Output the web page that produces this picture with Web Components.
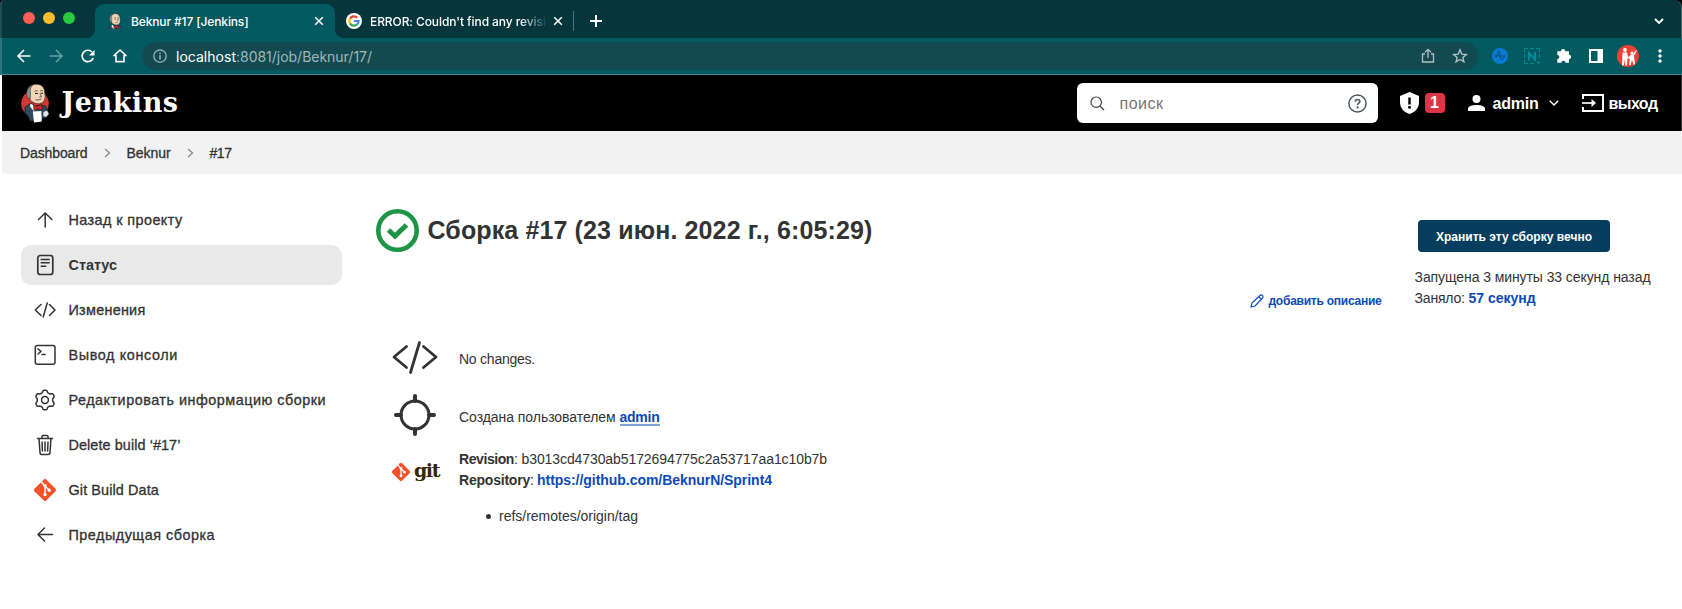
<!DOCTYPE html>
<html lang="ru">
<head>
<meta charset="utf-8">
<title>Beknur #17 [Jenkins]</title>
<style>
html,body{margin:0;height:100%;overflow:hidden;background:#fff}
body{font-family:"Liberation Sans",Arial,sans-serif;color:#333}
</style>
</head>
<body>
<browser-window>
  <jenkins-header></jenkins-header>
  <bread-crumbs></bread-crumbs>
  <build-page></build-page>
</browser-window>
<script>
const GIT = (s) => `<svg width="${s}" height="${s}" viewBox="0 0 24 24"><rect x="3.700" y="3.700" width="16.600" height="16.600" rx="1.600" transform="rotate(45 12 12)" fill="#f4502a"/><g stroke="#fff" stroke-width="1.500" fill="none"><path d="M8 3.500l4 4.500v8M12 8l4 4"/></g><circle cx="12" cy="7.800" r="1.700" fill="#fff"/><circle cx="12" cy="16.600" r="1.700" fill="#fff"/><circle cx="16.200" cy="12.200" r="1.700" fill="#fff"/></svg>`;
const BUTLER = (w, h, box, disc) => `<svg width="${w}" height="${h}" viewBox="${box}">${disc ? '<ellipse cx="14" cy="20.500" rx="13.800" ry="13.500" fill="#d33833"/>' : ''}<path d="M4 24l6-4 4 3 5-1 5.500 1 3 7-3 5-4 .5L19 38H9l-2-5-3-3z" fill="#2f4a5c" stroke="#131c22" stroke-width=".8"/><path d="M9.500 20.500l5 3-1.500 5-4-5z" fill="#fff"/><path d="M12.500 22l4 1.500 4-2 1 5.500-4.500-1.500-4 2z" fill="#d5282c" stroke="#4a1010" stroke-width=".6"/><path d="M6.500 9C7 3.500 11 1.200 15.500 1.200c5 0 8 3.300 8.300 8.300l.4 4c0 4.500-3 7.300-6.700 7.300-4 0-8-2.300-9.500-6z" fill="#f0d6b7" stroke="#3b2f28" stroke-width=".8"/><path d="M7 15.500C4.500 11 5.500 4 11.500 1.900 9 5 8.800 7.500 9.400 9.500l-.2 6z" fill="#8f9295" stroke="#333" stroke-width=".7"/><path d="M13.500 8.500q1.500-1.300 3.200-.6M19 7.800q1.500-.8 3 .2" stroke="#4b3829" fill="none" stroke-width=".8"/><path d="M14 10.500h3M19.500 10.300h2.500" stroke="#222" stroke-width="1.100"/><path d="M18.800 10.500l1.800 3.200-2.300.4M14.500 16.800q3 .8 6-.9" stroke="#4b3829" fill="none" stroke-width=".8"/><path d="M11.800 28.500l8.500-.5.5 10.500-7.800 1z" fill="#fff"/><path d="M22.500 29l3.500-1.500 1.800 3.500-2.500 3-3-1z" fill="#e4e4e4"/></svg>`;

const define = (name, markup) => customElements.define(name, class extends HTMLElement {
  constructor() {
    super();
    const t = document.createElement('template');
    t.innerHTML = markup;
    this.attachShadow({mode: 'open'}).append(t.content.cloneNode(true));
  }
});

/* One line of text whose tracking is adjusted to a measured width. */
customElements.define('fit-text', class extends HTMLElement {
  constructor() {
    super();
    this.attachShadow({mode: 'open'}).innerHTML = `<style>:host{display:inline-block;white-space:pre;flex:none}span{display:inline-block}</style><span><slot></slot></span>`;
  }
  connectedCallback() {
    const span = this.shadowRoot.querySelector('span');
    const w = +this.getAttribute('w'), n = this.textContent.length;
    span.style.letterSpacing = ((w - span.getBoundingClientRect().width) / n) + 'px';
    this.style.width = w + 'px';
  }
});

define('browser-tab', `<style>
:host{display:flex;align-items:center;box-sizing:border-box;height:34px;margin-top:4px;font:500 12px Inter,sans-serif;color:#fff}
:host([active]){width:240px;background:#035a61;border-radius:9px 9px 0 0;padding:0 11px 0 12px;position:relative}
:host([active])::before,:host([active])::after{content:"";position:absolute;bottom:0;width:8px;height:8px}
:host([active])::before{left:-8px;background:radial-gradient(circle at 0 0,transparent 7.500px,#035a61 8px)}
:host([active])::after{right:-8px;background:radial-gradient(circle at 100% 0,transparent 7.500px,#035a61 8px)}
:host(:not([active])){width:239px;padding-left:11px;box-sizing:border-box;border:0}
.t{flex:1;overflow:hidden;white-space:nowrap;margin-left:8px}
:host(:not([active])) .t{flex:none;width:176px;-webkit-mask:linear-gradient(90deg,#000 85%,transparent 101%);mask:linear-gradient(90deg,#000 85%,transparent 101%)}
.x{flex:none}:host(:not([active])) .x{margin-left:7px}
::slotted(*){flex:none;display:block}
::slotted(fit-text){display:inline-block}
</style><slot name="icon"></slot><div class="t"><slot></slot></div><svg class="x" width="10" height="10" viewBox="0 0 10 10"><path d="M1.200 1.200l7.600 7.600M8.800 1.200L1.200 8.800" stroke="#fff" stroke-width="1.500"/></svg>`);

define('browser-window', `<style>
:host{display:flex;flex-direction:column;height:609px;width:1682px;overflow:hidden}
.chrome{background:#000;box-shadow:none}
.strip{display:flex;box-sizing:border-box;height:38px;background:#04363c;border-top-left-radius:4px;border-top-right-radius:8px;padding-right:17px;border-left:2px solid #1f4d52;border-right:1px solid #48696d}
.lights{display:flex;gap:8px;align-items:center;width:72px;padding:0 0 3px 21px}
.lights i{width:12px;height:12px;border-radius:50%}
.sep{width:1px;height:20px;background:#4f7478;margin:11px 16px 0 -1px}
.plus{margin-top:15px}.down{margin:18px 0 0 auto}
.bar{display:flex;align-items:center;height:36px;background:#035a61;border-bottom:1px solid #45888d;border-left:2px solid #2b747a;padding:0 14px 0 14px}
.nav{display:flex;gap:16px;width:126px}
.omni{display:flex;align-items:center;width:1336px;height:28px;border-radius:14px;background:#134a51;box-sizing:border-box;padding:0 10px 0 11px;font:14px Inter,sans-serif;color:#a1b7b9}
.omni b{font-weight:400;color:#fff}
.sh{margin-left:auto;margin-right:16px}
.ext{display:flex;align-items:center;margin-left:14px;gap:16px}
svg{display:block;flex:none}
.page{flex:1;background:#fff;border-left:2px solid #fff;display:flex;flex-direction:column}
</style>
<div class="chrome"><div class="strip"><div class="lights"><i style="background:#ff5f57"></i><i style="background:#febc2e"></i><i style="background:#28c840"></i></div>
<browser-tab active><span slot="icon">${BUTLER(16,16,'2 0 26 28',false)}</span><fit-text w="117.500">Beknur #17 [Jenkins]</fit-text></browser-tab>
<browser-tab><svg slot="icon" width="16" height="16" viewBox="0 0 16 16"><circle cx="8" cy="8" r="8" fill="#fff"/><g fill="none" stroke-width="2.200"><path d="M4 5.600A4.600 4.600 0 0 1 11.300 4.800" stroke="#ea4335"/><path d="M4 10.400a4.700 4.700 0 0 1 0-4.800" stroke="#fbbc05"/><path d="M11.200 11.300A4.600 4.600 0 0 1 4 10.400" stroke="#34a853"/><path d="M8 8h4.600c0 1.400-.4 2.500-1.400 3.300" stroke="#4285f4"/></g></svg><fit-text w="183">ERROR: Couldn't find any revisio</fit-text></browser-tab>
<div class="sep"></div><svg class="plus" width="12" height="12"><path d="M6 0v12M0 6h12" stroke="#fff" stroke-width="2"/></svg>
<svg class="down" width="10" height="7"><path d="M1 1l4 4 4-4" stroke="#fff" stroke-width="1.800" fill="none"/></svg></div></div>
<div class="bar"><div class="nav">
<svg width="16" height="16"><path d="M14.500 8H2.500M8 2L2 8l6 6" stroke="#fff" stroke-width="1.500" fill="none"/></svg>
<svg width="16" height="16"><path d="M1.500 8h12M8 2l6 6-6 6" stroke="#6a9fa3" stroke-width="1.500" fill="none"/></svg>
<svg width="16" height="16"><path d="M13.200 10A5.700 5.700 0 1 1 12 4" stroke="#fff" stroke-width="1.700" fill="none"/><path d="M14.500 2V7.500H9z" fill="#fff"/></svg>
<svg width="16" height="16"><path d="M1.500 8.200L8 2l6.500 6.200M4 7v6.600h8V7" stroke="#fff" stroke-width="1.600" fill="none"/></svg>
</div><div class="omni"><svg width="14" height="14"><circle cx="7" cy="7" r="6.200" fill="none" stroke="#a1b7b9" stroke-width="1.300"/><path d="M7 6v4.500M7 3.500v1.400" stroke="#a1b7b9" stroke-width="1.500"/></svg><span style="width:9px"></span><b><fit-text w="60">localhost</fit-text></b><fit-text w="136">:8081/job/Beknur/17/</fit-text>
<svg class="sh" width="16" height="16"><path d="M5 6H2.500v8h11V6H11M8 10V1.500M5 4.300L8 1.300l3 3" stroke="#b0c0c2" stroke-width="1.300" fill="none"/></svg>
<svg width="16" height="16"><path d="M8 1.800l1.800 4.300 4.500.4-3.400 3 1 4.400L8 11.500 4.100 13.900l1-4.400-3.400-3 4.500-.4z" stroke="#b0c0c2" stroke-width="1.400" fill="none"/></svg></div>
<div class="ext">
<svg width="16" height="16"><circle cx="8" cy="8" r="8" fill="#0a7bd3"/><path d="M2 8h12M4 9.500L7 3l2 8.500h1.500L12.500 8" stroke="#085486" stroke-width="1.100" fill="none"/></svg>
<svg width="16" height="16"><path d="M.5 4V.5H4M6 .5h4M12 .5h3.500V4M15.500 6v4M.5 6v4M.5 12v3.500H4M6 15.500h4M13 14.500h3M14.500 13v3" fill="none" stroke="#078a98"/><path d="M5 12.500V5l6 6.500V4" stroke="#078a98" stroke-width="2.200" fill="none"/></svg>
<svg width="16" height="16"><path d="M5 3.200a2.100 2.100 0 0 1 4.200 0H13v3.600a2.100 2.100 0 0 1 0 4.200V14.800H9.500a2.100 2.100 0 0 0-4.200 0H1.300v-3.700a2.100 2.100 0 0 0 0-4.200V3.200z" fill="#fff"/></svg>
<svg width="16" height="16"><path d="M2 2h12v12H2z" stroke="#fff" stroke-width="2" fill="none"/><path d="M9.500 1H15v14H9.500z" fill="#fff"/></svg>
<svg width="22" height="22" style="margin:0 -3px"><circle cx="11" cy="11" r="11" fill="#ee4035"/><circle cx="8" cy="5" r="1.900" fill="#fff"/><circle cx="15" cy="8" r="1.500" fill="#fff"/><path d="M5.500 7.500h4.500l1.200 5 2.800-3h2L19 5l.8.500L17 11l1 8.500h-1.500L15 15l-1.500 5H12l.8-6.500-2.300 0-.5 7H8.200l-.5-6-1 6H5z" fill="#fff"/></svg>
<svg width="16" height="16"><g fill="#fff"><circle cx="8" cy="3" r="1.700"/><circle cx="8" cy="8" r="1.700"/><circle cx="8" cy="13" r="1.700"/></g></svg>
</div></div>
<div class="page"><slot></slot></div>`);

define('jenkins-header', `<style>
:host{display:flex;align-items:center;height:56px;background:#000;color:#fff;padding:0 23.500px 0 19px;font-weight:700;font-size:16px;border-right:1px solid #3a3a3a}
svg{display:block;flex:none}
.word{font:700 27px "DejaVu Serif",serif;margin:-1px auto 0 12.500px}
.search{display:flex;align-items:center;box-sizing:border-box;width:301px;height:40px;border-radius:6px;background:#fff;color:#757575;font-weight:400;padding:0 11px 0 13px}
.search fit-text{margin:1px auto 0 15px}
.n{display:flex;align-items:center;justify-content:center;width:20px;height:20px;border-radius:4px;background:#dc3545;margin:0 23px 0 6px}
</style>${BUTLER(28,40,'0 0 28 40',true)}<fit-text class="word" w="117">Jenkins</fit-text>
<div class="search"><svg width="15" height="15"><circle cx="6.200" cy="6.200" r="5.200" fill="none" stroke="#444" stroke-width="1.200"/><path d="M10 10l4 4" stroke="#444" stroke-width="1.300"/></svg><fit-text w="44">поиск</fit-text>
<svg width="19" height="19" viewBox="0 0 19 19"><circle cx="9.500" cy="9.500" r="8.600" fill="none" stroke="#4d545d" stroke-width="1.500"/><path d="M7.300 7.700c0-3 4.600-2.900 4.600-.2 0 1.600-2.300 1.700-2.300 3.400" fill="none" stroke="#4d545d" stroke-width="1.600"/><circle cx="9.600" cy="13.400" r="1.100" fill="#4d545d"/></svg></div>
<svg width="19" height="22" viewBox="0 0 19 22" style="margin-left:22px"><path d="M9.500 0L19 4v6c0 6-4 10.500-9.500 12C4 20.500 0 16 0 10V4z" fill="#fff"/><path d="M9.500 5.500v7" stroke="#000" stroke-width="2.500"/><circle cx="9.500" cy="15.300" r="1.500"/></svg><div class="n">1</div>
<svg width="17" height="16"><circle cx="8.500" cy="4" r="4" fill="#fff"/><path d="M0 16v-2c0-3 4-4 8.500-4S17 11 17 14v2z" fill="#fff"/></svg>
<fit-text w="46" style="margin:1px 10px 0 8px">admin</fit-text><svg width="10" height="6"><path d="M.7.700L5 5 9.300.7" stroke="#fff" stroke-width="1.400" fill="none"/></svg>
<svg width="22" height="18" viewBox="0 0 22 18" style="margin:0 5px 0 23px"><path d="M1 5V1h20v16H1v-4" stroke="#fff" stroke-width="1.900" fill="none"/><path d="M0 9h12" stroke="#fff" stroke-width="1.700"/><path d="M9.500 5l4.500 4-4.500 4z" fill="#fff"/></svg><fit-text w="49" style="margin-top:2px">выход</fit-text>`);

define('bread-crumbs', `<style>:host{display:flex;align-items:center;height:43px;background:#f2f2f2;padding-left:18px;font-size:14px;-webkit-text-stroke:.3px #333;color:#333}svg{margin:0 16px}</style>
<fit-text w="67.500">Dashboard</fit-text><svg width="7" height="10"><path d="M1 1l4.500 4L1 9" fill="none" stroke="#888" stroke-width="1.300"/></svg><fit-text w="44">Beknur</fit-text><svg width="7" height="10"><path d="M1 1l4.500 4L1 9" fill="none" stroke="#888" stroke-width="1.300"/></svg><fit-text w="22">#17</fit-text>`);

define('side-item', `<style>:host{display:flex;align-items:center;box-sizing:border-box;height:40px;width:321px;border-radius:10px;padding-left:13px;font-size:14.400px;-webkit-text-stroke:.32px #333}
:host([active]){background:#e9e9e9;font-weight:700;-webkit-text-stroke:0}
.i{display:flex;justify-content:center;width:22px;margin-right:12.500px}::slotted(svg){display:block;flex:none}</style><div class="i"><slot name="icon"></slot></div><slot></slot>`);

const svg = (p) => `<svg slot="icon" width="22" height="22" viewBox="0 0 22 22" fill="none" stroke="#333" stroke-width="1.500" stroke-linecap="round" stroke-linejoin="round">${p}</svg>`;
/* Outline of the six-lobed cog. */
const gear = (() => { let d = ''; for (let i = 0; i <= 96; i++) { const a = i / 96 * 2 * Math.PI; const r = 8.800 + 1.1 * Math.tanh(2.2 * Math.cos(6 * a)); d += (i ? 'L' : 'M') + (11 + r * Math.sin(a)).toFixed(2) + ' ' + (11 - r * Math.cos(a)).toFixed(2); } return d + 'z'; })();
define('side-nav', `<style>:host{display:flex;flex-direction:column;gap:5px;width:321px;flex:none}</style>
<side-item>${svg('<path d="M11.200 18V4M4.500 10.500L11.200 4l6.700 6.500"/>')}<fit-text w="114">Назад к проекту</fit-text></side-item>
<side-item active>${svg('<rect x="3.800" y="1.500" width="15" height="19" rx="2.500" stroke-width="1.700"/><path d="M7.200 5.500h8M7.200 8.700h8M7.200 12.200h4.500" stroke-width="1.500"/>')}<fit-text w="48.500">Статус</fit-text></side-item>
<side-item>${svg('<path d="M7 5.500L1.300 11 7 16.500M15.500 5.500L21 11l-5.500 5.500M13.200 4L9.200 18"/>')}<fit-text w="77">Изменения</fit-text></side-item>
<side-item>${svg('<rect x="1.300" y="1.500" width="19.700" height="18.700" rx="2"/><path d="M4 4.800l3 2.600-3 2.600M8 10.500h3"/>')}<fit-text w="109.500">Вывод консоли</fit-text></side-item>
<side-item>${svg('<path d="' + gear + '"/><circle cx="11" cy="11" r="3.400"/>')}<fit-text w="257.500">Редактировать информацию сборки</fit-text></side-item>
<side-item>${svg('<path d="M3.500 4.500h15M5 4.500l1 14a2 2 0 0 0 2 2h6a2 2 0 0 0 2-2l1-14M8 4.500V2.500a1 1 0 0 1 1-1h4a1 1 0 0 1 1 1v2M8 8l.4 9M11 8v9M14 8l-.4 9"/>')}<fit-text w="112">Delete build ‘#17’</fit-text></side-item>
<side-item><span slot="icon" style="display:flex;margin:0 -1px">${GIT(24)}</span><fit-text w="90.500">Git Build Data</fit-text></side-item>
<side-item>${svg('<path d="M18.500 10.500h-14M10.500 4L4 10.500l6.500 6.500"/>')}<fit-text w="146.500">Предыдущая сборка</fit-text></side-item>`);

define('summary-row', `<style>:host{display:flex;align-items:center;font-size:14px;line-height:21px}.i{width:48px;display:flex;justify-content:center;flex:none;margin-right:20px}</style><div class="i"><slot name="icon"></slot></div><div><slot></slot></div>`);

define('build-page', `<style>
:host{display:flex;padding:26px 32.500px 0 19px;font-size:14px;line-height:21px}
main{flex:1;margin-left:33px}
.top{display:flex;justify-content:space-between;height:139px}
h1{display:flex;align-items:center;margin:7px 0 0;height:46px;font-size:25px;line-height:30px}
h1 svg{margin:0 9px 0 .500px}
.r{display:flex;align-items:flex-start}
.add{display:flex;align-items:center;margin:90.500px 33px 0 0;font-size:12px;font-weight:700;color:#0b4ab8;gap:5px}
.info{width:235px}
.btn{display:flex;align-items:center;justify-content:center;box-sizing:border-box;width:192px;height:32px;border-radius:4px;background:#073e60;color:#fff;font-weight:700;font-size:12px;margin:20px 0 15px 3.500px;padding-top:2px}
.line{display:flex;height:21px}.bl{font-weight:700;color:#0b4ab8}
.u{border-bottom:2px solid #7f9fdc;line-height:15px;height:14px;margin-top:3px}
summary-row{margin-left:16px}
.b{font-weight:700}
.li{display:flex;align-items:center;margin:15px 0 0 111px}.li i{width:5px;height:5px;border-radius:50%;background:#333;margin-right:8px}
.git{display:flex;align-items:center;font:700 19px/20px "DejaVu Serif",serif;color:#362701;gap:3px;margin-top:4px}
.git fit-text{margin-top:-3px}
</style>
<side-nav></side-nav>
<main><div class="top"><h1><svg width="43" height="43" viewBox="0 0 43 43"><circle cx="21.500" cy="21.500" r="19.200" fill="none" stroke="#1e9446" stroke-width="4.600"/><path d="M12.500 21l6.500 6L30.500 16" fill="none" stroke="#1e9446" stroke-width="5"/></svg><fit-text w="445">Сборка #17 (23 июн. 2022 г., 6:05:29)</fit-text></h1>
<div class="r"><div class="add"><svg width="14" height="14"><path d="M1 13l1-4L10 1.500a1.600 1.600 0 0 1 2.500 2.500L5 12z M9 3l2.500 2.300" fill="none" stroke="#0b4ab8" stroke-width="1.100" stroke-linejoin="round"/></svg><fit-text w="113">добавить описание</fit-text></div>
<div class="info"><div class="btn"><fit-text w="156">Хранить эту сборку вечно</fit-text></div><div class="line"><fit-text w="236">Запущена 3 минуты 33 секунд назад</fit-text></div><div class="line"><fit-text w="54">Заняло: </fit-text><fit-text class="bl" w="67">57 секунд</fit-text></div></div></div></div>
<summary-row style="height:36px"><svg slot="icon" width="46" height="36" viewBox="0 0 46 36" fill="none" stroke="#333" stroke-width="2.800" stroke-linecap="round" stroke-linejoin="round"><path d="M14.500 7.500L2 18l12.500 10.500M31.500 7.500L44 18 31.500 28.500M27.500 3.500l-9 30"/></svg><fit-text w="76" style="margin-top:5px">No changes.</fit-text></summary-row>
<summary-row style="height:42px;margin-top:18.500px"><svg slot="icon" width="42" height="42" viewBox="0 0 42 42" fill="none" stroke="#333" stroke-linecap="round"><circle cx="21" cy="21" r="14" stroke-width="3"/><path d="M21 2v5M21 35v5M2 21h5M35 21h5" stroke-width="4"/></svg><div style="display:flex;margin-top:5px"><fit-text w="160.500">Создана пользователем </fit-text><div class="u"><fit-text w="40" class="bl">admin</fit-text></div></div></summary-row>
<summary-row style="height:42px;margin-top:13px"><div slot="icon" class="git">${GIT(20)}<fit-text w="25">git</fit-text></div><div class="line"><fit-text class="b" w="55">Revision</fit-text><fit-text w="7.500">: </fit-text><fit-text w="305.500">b3013cd4730ab5172694775c2a53717aa1c10b7b</fit-text></div><div class="line"><fit-text class="b" w="71">Repository</fit-text><fit-text w="7">: </fit-text><fit-text class="bl" w="235">https://github.com/BeknurN/Sprint4</fit-text></div></summary-row>
<div class="li"><i></i><fit-text w="139">refs/remotes/origin/tag</fit-text></div>
</main>`);
</script>
</body>
</html>
